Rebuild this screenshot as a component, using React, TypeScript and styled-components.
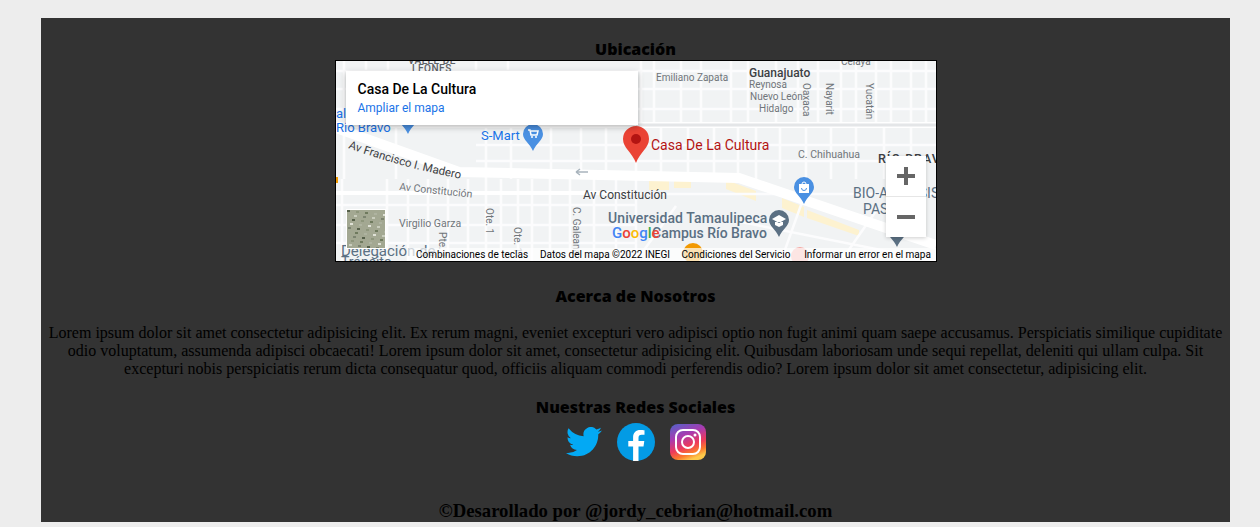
import React from 'react';
import styled, { createGlobalStyle } from 'styled-components';

const GlobalStyle = createGlobalStyle`
	html, body {
		margin: 0;
		padding: 0;
		background: #ededed;
		overflow: hidden;
	}
`;

const Page = styled.div`
	width: 1260px;
	height: 527px;
	padding: 18px 30px 5px 41px;
	box-sizing: border-box;
`;

const Panel = styled.main`
	height: 504px;
	background: #333333;
	padding: 20px 7px 0;
	box-sizing: border-box;
	color: #000000;
	text-align: center;
	font-family: "Liberation Serif", serif;
	font-size: 16px;
	line-height: 18px;
`;

const Heading = styled.h2<{ $top?: number }>`
	margin: ${(p) => p.$top ?? 0}px 0 0;
	font-family: "Open Sans", sans-serif;
	font-size: 16px;
	line-height: 22px;
	font-weight: 800;
`;

const MapFrame = styled.div`
	position: relative;
	width: 600px;
	height: 200px;
	margin: 0 auto;
	border: 1px solid #000000;
	overflow: hidden;
	background: #f1f3f4;
	font-family: Roboto, sans-serif;
`;

const MapCanvas = styled.svg`
	display: block;
	font-family: Roboto, sans-serif;
`;

const InfoCard = styled.div`
	position: absolute;
	top: 10px;
	left: 10px;
	width: 292px;
	height: 54px;
	padding: 10px 12px;
	box-sizing: border-box;
	background: #ffffff;
	box-shadow: 0 2px 6px rgba(0, 0, 0, 0.3);
	text-align: left;
`;

const PlaceName = styled.div`
	font-size: 14px;
	line-height: 17px;
	font-weight: 500;
	color: #000000;
`;

const EnlargeLink = styled.a`
	display: block;
	margin-top: 3px;
	font-size: 12px;
	line-height: 15px;
	color: #1a73e8;
`;

const ZoomBox = styled.div`
	position: absolute;
	top: 95px;
	left: 550px;
	width: 40px;
	height: 81px;
	background: #ffffff;
	box-shadow: 0 1px 4px rgba(0, 0, 0, 0.2);
	display: flex;
	flex-direction: column;
`;

const ZoomButton = styled.div`
	flex: 1;
	display: flex;
	align-items: center;
	justify-content: center;
	& + & {
		border-top: 1px solid #e6e6e6;
	}
`;

const Thumbnail = styled.div`
	position: absolute;
	top: 148px;
	left: 10px;
	width: 38px;
	height: 38px;
	border: 1px solid #ffffff;
	overflow: hidden;
`;

const Attribution = styled.div`
	position: absolute;
	right: 0;
	bottom: 0;
	height: 13px;
	display: flex;
	font-size: 10px;
	line-height: 13px;
	color: #000000;
	white-space: nowrap;
`;

const AttributionItem = styled.span<{ $width: number }>`
	width: ${(p) => p.$width}px;
	padding-left: 6px;
	box-sizing: border-box;
	background: rgba(255, 255, 255, 0.7);
`;

const Paragraph = styled.p`
	margin: 17px 0 0;
`;

const SocialRow = styled.div`
	display: flex;
	justify-content: center;
	align-items: center;
	gap: 15px;
	height: 46px;
	margin: 1px 0 0 1px;
`;

const Footer = styled.h3`
	margin: 35px 0 0;
	font-size: 18.72px;
	line-height: 22px;
	font-weight: 700;
`;

// street grid per zone of the map, in the map's own coordinates
const topColumns = [8, 30, 52, 140, 172, 305, 318, 345, 365, 395, 412, 440, 462, 482, 505, 520, 540, 555, 575, 590];
const topRows = [10, 28, 48];
const midColumns = [8, 60, 150, 175, 215, 245, 270, 300, 325, 352, 378, 402, 420, 444, 470, 495, 520, 548, 575];
const midRows = [84, 100];
const lowColumns = [6, 51, 72, 92, 112, 132, 150, 165, 182, 196, 214, 234, 258];
const lowRows = [144, 164, 182];

const yellowPatches = [
	'300,112 308,112 308,119 300,119',
	'313,112 333,112 333,129 313,129',
	'338,112 355,112 355,127 338,127',
	'390,119 420,130 420,140 390,128',
	'446,137 468,146 468,156 446,147',
	'471,149 523,169 523,175 471,157',
];

const thumbCells = Array.from({ length: 260 }, (_, i) => ({
	x: (i * 17) % 38,
	y: (i * 23) % 38,
	fill: ['#6f7a5e', '#c9cdbd', '#8e967c', '#dfe1d6', '#56604a', '#aeb3a0', '#7c8470'][i % 7],
}));

const Pin = ({ x, y, fill, children }: { x: number; y: number; fill: string; children?: React.ReactNode }) => (
	<g transform={`translate(${x} ${y})`}>
		<path d="M10 0a10 10 0 0 1 10 10c0 6-6.500 9-10 17C6.500 19 0 16 0 10A10 10 0 0 1 10 0z" fill={fill} />
		{children}
	</g>
);

const StreetMap = () => (
	<MapCanvas width="600" height="200" viewBox="0 0 600 200">
		<rect width="600" height="200" fill="#f1f3f4" />
		{yellowPatches.map((points) => <polygon key={points} points={points} fill="#fdf2d0" />)}
		<g stroke="#fcfcfd" strokeWidth="2.500" fill="none">
			{topColumns.map((x) => <path key={x} d={`M${x} 0V64`} />)}
			{topRows.map((y) => <path key={y} d={`M0 ${y}H600`} />)}
			{midColumns.map((x) => <path key={x} d={`M${x} 64V118`} />)}
			{midRows.map((y) => <path key={y} d={`M140 ${y}H600`} />)}
			{lowColumns.map((x) => <path key={x} d={`M${x} 118V200`} />)}
			{lowRows.map((y) => <path key={y} d={`M0 ${y}H300`} />)}
			<path d="M280 118V200M300 118V200" />
			<path d="M300 133L600 133M400 160L600 200M340 145L300 200M470 130L445 200M540 150L505 200" />
		</g>
		<path d="M0 64H600" stroke="#ffffff" strokeWidth="6" fill="none" />
		<path d="M300 64H600" stroke="#e4e6e8" strokeWidth="3" fill="none" />
		<path d="M0 67L123 111L403 117L600 184" stroke="#ffffff" strokeWidth="10" fill="none" />
		<path d="M0 132H300" stroke="#ffffff" strokeWidth="4" fill="none" />
		<path d="M240 111h12M240 111l4-3M240 111l4 3" stroke="#a9b4bd" strokeWidth="1.500" fill="none" />
		<rect x="0" y="116" width="2" height="6" fill="#f29900" />

		<g fill="#70757a">
			<text x="72" y="3" fontSize="10" fontWeight="500" letterSpacing="0.500" fill="#5f6368">VALLE DE</text>
			<text x="76" y="11" fontSize="10" fontWeight="500" letterSpacing="0.500" fill="#5f6368">LEONES</text>
			<text x="320" y="20" fontSize="10">Emiliano Zapata</text>
			<text x="505" y="4" fontSize="10">Celaya</text>
			<text x="413" y="27" fontSize="10">Reynosa</text>
			<text x="414" y="39" fontSize="10">Nuevo León</text>
			<text x="423" y="51" fontSize="10">Hidalgo</text>
			<text x="413" y="16" fontSize="12" fontWeight="500" fill="#3c4043">Guanajuato</text>
			<text x="462" y="97" fontSize="10.500">C. Chihuahua</text>
			<text transform="translate(467 22) rotate(90)" fontSize="10">Oaxaca</text>
			<text transform="translate(490 22) rotate(90)" fontSize="10">Nayarit</text>
			<text transform="translate(530 22) rotate(90)" fontSize="10">Yucatán</text>
			<text transform="translate(63 129) rotate(6)" fontSize="10.500">Av Constitución</text>
			<text x="63" y="166" fontSize="10.500">Virgilio Garza</text>
			<text transform="translate(103 171) rotate(90)" fontSize="10">Pte. 1</text>
			<text transform="translate(150 147) rotate(90)" fontSize="10">Ote. 1</text>
			<text transform="translate(178 166) rotate(90)" fontSize="10">Ote. 1</text>
			<text transform="translate(237 146) rotate(90)" fontSize="10">C. Galeana</text>
		</g>
		<path id="maderoLine" d="M12 87Q70 108 132 119" fill="none" />
		<text fontSize="11.500" fill="#3c4043">
			<textPath href="#maderoLine">Av Francisco I. Madero</textPath>
		</text>
		<text x="247" y="138" fontSize="12" fill="#3c4043">Av Constitución</text>
		<text x="542" y="102" fontSize="12.500" fontWeight="500" letterSpacing="1" fill="#3c4043">RÍO BRAVO</text>
		<text x="145" y="79" fontSize="13" fill="#1a73e8">S-Mart</text>
		<text x="0" y="57" fontSize="13" fill="#1a73e8">al</text>
		<text x="0" y="71" fontSize="13" fill="#1a73e8">Río Bravo</text>
		<text x="315" y="89" fontSize="14" fill="#b31412">Casa De La Cultura</text>
		<text x="272" y="162" fontSize="14" letterSpacing="0.100" fill="#5b7083" fontWeight="500">Universidad Tamaulipeca</text>
		<text x="316" y="177" fontSize="14" fill="#5b7083" fontWeight="500">Campus Río Bravo</text>
		<text x="517" y="137" fontSize="14" fill="#5b7083">BIO-ANÁLISIS</text>
		<text x="527" y="153" fontSize="14" fill="#5b7083">PASTEUR</text>
		<text x="5" y="195" fontSize="15" fill="#5b7083">Delegación de</text>
		<text x="5" y="206" fontSize="14" fill="#5b7083">Tránsito</text>
		<text x="276" y="177" fontSize="15" fontWeight="500">
			<tspan fill="#4285f4">G</tspan><tspan fill="#ea4335">o</tspan><tspan fill="#fbbc05">o</tspan>
			<tspan fill="#4285f4">g</tspan><tspan fill="#34a853">l</tspan><tspan fill="#ea4335">e</tspan>
		</text>

		<Pin x={62} y={46} fill="#4a90e2" />
		<Pin x={187} y={63} fill="#4a90e2">
			<path d="M5 6h2l1 5h6l1-4H8" stroke="#ffffff" strokeWidth="1.500" fill="none" />
			<circle cx="9" cy="13" r="1" fill="#ffffff" />
			<circle cx="13" cy="13" r="1" fill="#ffffff" />
		</Pin>
		<Pin x={458} y={116} fill="#4a90e2">
			<path d="M5 7h10v9H5z" fill="#ffffff" />
			<path d="M8 7a2 2 0 0 1 4 0" stroke="#ffffff" fill="none" />
			<path d="M7.500 11a2.500 2.500 0 0 0 5 0" stroke="#4a90e2" fill="none" />
		</Pin>
		<Pin x={433} y={149} fill="#5b7083">
			<path d="M10 5l7 4-7 4-7-4zM6 12v3l4 2 4-2v-3" fill="#ffffff" />
		</Pin>
		<Pin x={551} y={159} fill="#5b7083" />
		<circle cx="357" cy="192" r="10" fill="#f29900" />
		<circle cx="464" cy="195" r="9" fill="#f4a7a1" />

		<path d="M300 65a13 13 0 0 1 13 13c0 9-9 13-13 24-4-11-13-15-13-24a13 13 0 0 1 13-13z" fill="#ea4335" />
		<circle cx="300" cy="78" r="5" fill="#b31412" />
	</MapCanvas>
);

const TwitterIcon = () => (
	<svg width="36" height="30" viewBox="0 0 24 20" aria-label="Twitter">
		<path
			fill="#03a9f4"
			d="M24 2.400a9.800 9.800 0 0 1-2.800.8A5 5 0 0 0 23.300.500a9.900 9.900 0 0 1-3.100 1.200 4.900 4.900 0 0 0-8.400 4.500A14 14 0 0 1 1.700.900a4.900 4.900 0 0 0 1.500 6.600 4.900 4.900 0 0 1-2.200-.6v.1a4.900 4.900 0 0 0 3.900 4.800 5 5 0 0 1-2.200.1 4.900 4.900 0 0 0 4.600 3.400A9.900 9.900 0 0 1 0 17.300 14 14 0 0 0 7.500 19.500c9.100 0 14-7.500 14-14v-.6A10 10 0 0 0 24 2.400z"
		/>
	</svg>
);

const FacebookIcon = () => (
	<svg width="38" height="38" viewBox="0 0 38 38" aria-label="Facebook">
		<circle cx="19" cy="19" r="19" fill="#039be5" />
		<path
			fill="#ffffff"
			d="M21.500 38V23.500h5l.8-5.500h-5.800v-3.200c0-1.900.9-3.100 3.200-3.100h2.800V7.300c-1-.2-2.700-.3-4.200-.3-4.400 0-7.200 2.700-7.200 7.300V18h-4.800v5.500h4.800V38z"
		/>
	</svg>
);

const InstagramIcon = () => (
	<svg width="36" height="36" viewBox="0 0 36 36" aria-label="Instagram">
		<defs>
			<linearGradient id="igFill" x1="0.150" y1="0" x2="0.550" y2="1">
				<stop offset="0" stopColor="#5b5fc7" />
				<stop offset="0.350" stopColor="#a83bb0" />
				<stop offset="0.650" stopColor="#ee3a5a" />
				<stop offset="0.850" stopColor="#fb7b2c" />
				<stop offset="1" stopColor="#fdc84a" />
			</linearGradient>
		</defs>
		<rect width="36" height="36" rx="8" fill="url(#igFill)" />
		<rect x="6" y="6" width="24" height="24" rx="7" fill="none" stroke="#ffffff" strokeWidth="2" />
		<circle cx="18" cy="18" r="6" fill="none" stroke="#ffffff" strokeWidth="2" />
		<circle cx="25" cy="11" r="1.500" fill="#ffffff" />
	</svg>
);

export default function App() {
	return (
		<Page>
			<GlobalStyle />
			<Panel>
				<Heading>Ubicación</Heading>
				<MapFrame>
					<StreetMap />
					<InfoCard>
						<PlaceName>Casa De La Cultura</PlaceName>
						<EnlargeLink>Ampliar el mapa</EnlargeLink>
					</InfoCard>
					<Thumbnail>
						<svg width="38" height="38" viewBox="0 0 38 38">
							<rect width="38" height="38" fill="#a3a892" />
							{thumbCells.map((c, i) => <rect key={i} x={c.x} y={c.y} width="3" height="2" fill={c.fill} />)}
						</svg>
					</Thumbnail>
					<ZoomBox>
						<ZoomButton>
							<svg width="18" height="18" viewBox="0 0 18 18"><path d="M0 7h7V0h4v7h7v4h-7v7H7v-7H0z" fill="#666666" /></svg>
						</ZoomButton>
						<ZoomButton>
							<svg width="18" height="4" viewBox="0 0 18 4"><path d="M0 0h18v4H0z" fill="#666666" /></svg>
						</ZoomButton>
					</ZoomBox>
					<Attribution>
						<AttributionItem $width={125}>Combinaciones de teclas</AttributionItem>
						<AttributionItem $width={141}>Datos del mapa ©2022 INEGI</AttributionItem>
						<AttributionItem $width={121}>Condiciones del Servicio</AttributionItem>
						<AttributionItem $width={142}>Informar un error en el mapa</AttributionItem>
					</Attribution>
				</MapFrame>
				<Heading $top={23}>Acerca de Nosotros</Heading>
				<Paragraph>
					Lorem ipsum dolor sit amet consectetur adipisicing elit. Ex rerum magni, eveniet excepturi vero adipisci optio non fugit animi quam saepe accusamus. Perspiciatis similique cupiditate odio voluptatum, assumenda adipisci obcaecati! Lorem ipsum dolor sit amet, consectetur adipisicing elit. Quibusdam laboriosam unde sequi repellat, deleniti qui ullam culpa. Sit excepturi nobis perspiciatis rerum dicta consequatur quod, officiis aliquam commodi perferendis odio? Lorem ipsum dolor sit amet consectetur, adipisicing elit.
				</Paragraph>
				<Heading $top={18}>Nuestras Redes Sociales</Heading>
				<SocialRow>
					<TwitterIcon />
					<FacebookIcon />
					<InstagramIcon />
				</SocialRow>
				<Footer>©Desarollado por @jordy_cebrian@hotmail.com</Footer>
			</Panel>
		</Page>
	);
}
